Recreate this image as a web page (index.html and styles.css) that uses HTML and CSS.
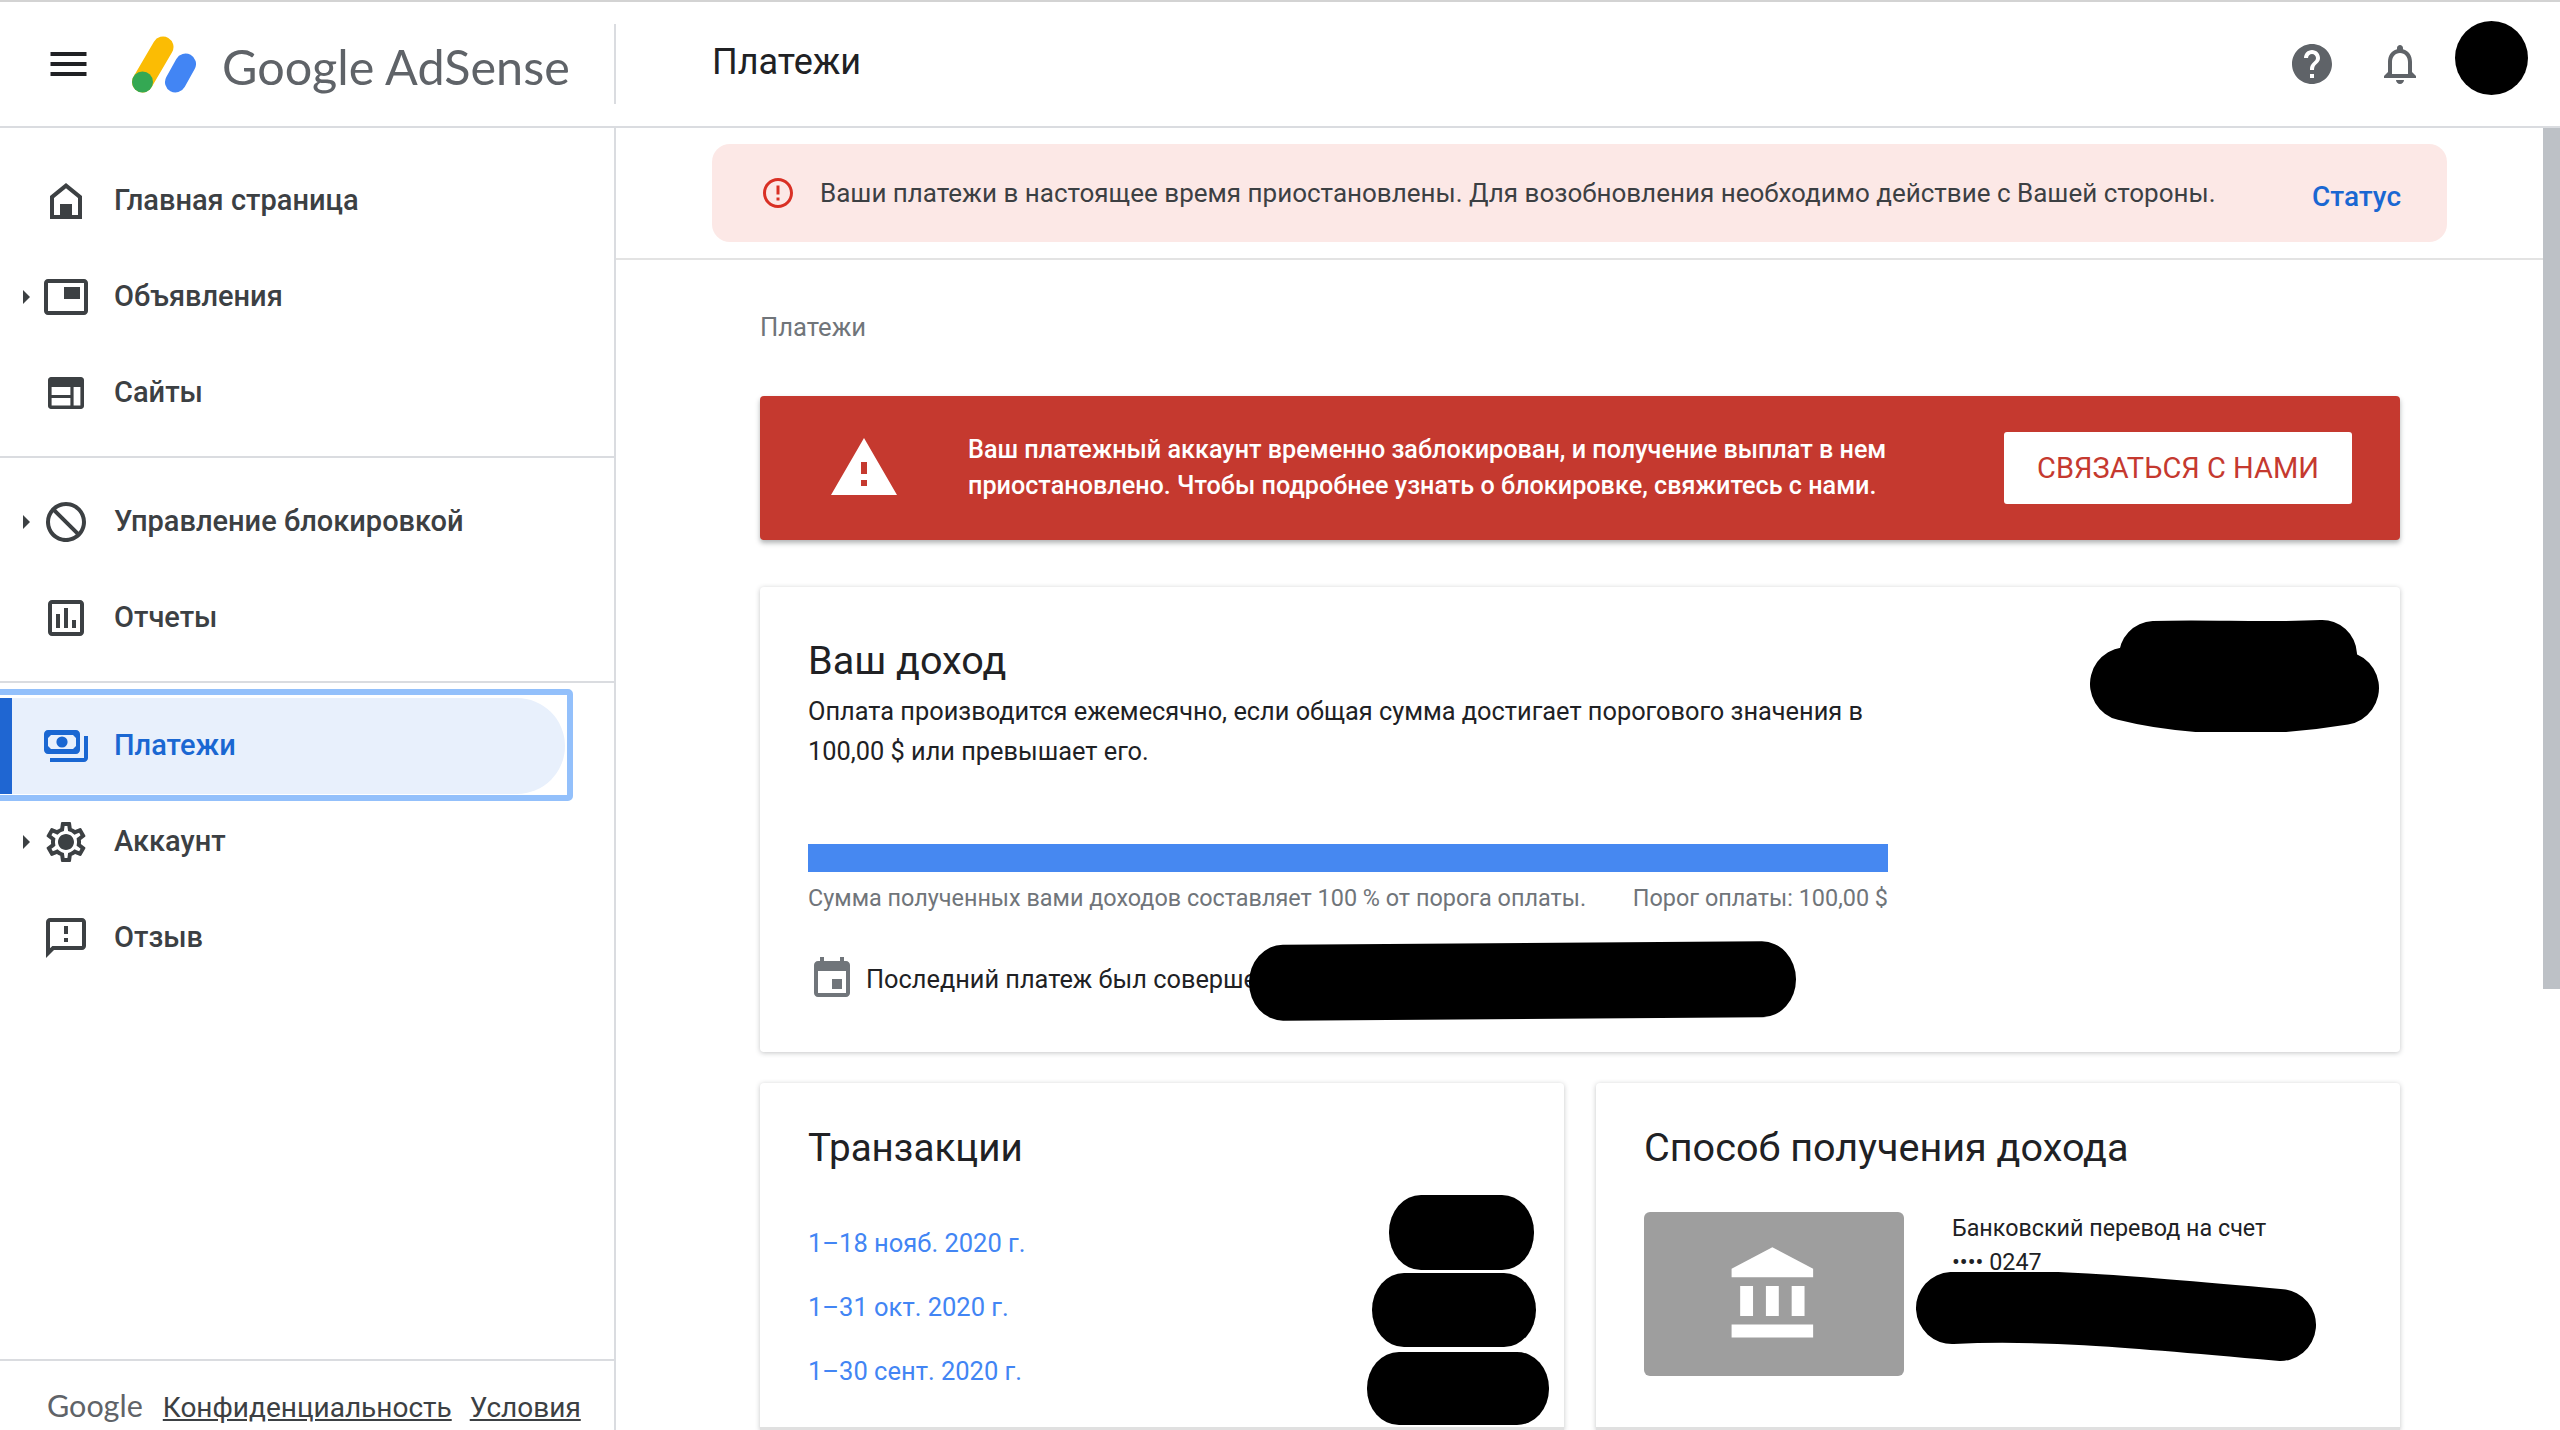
FILE: index.html
```html
<!DOCTYPE html>
<html lang="ru">
<head>
    <meta charset="UTF-8">
    <title>Платежи - Google AdSense</title>
    <link rel="stylesheet" href="styles.css">
</head>
<body>
<!-- Top bar -->
<header class="topbar">
    <div class="brand">
        <svg class="menu-icon" viewBox="3 6 18 12"><path d="M3 18h18v-2H3v2zm0-5h18v-2H3v2zm0-7v2h18V6H3z"/></svg>
        <svg class="logo" viewBox="0 0 64 57">
            <line x1="31" y1="11" x2="10.5" y2="46" stroke="#fbbc04" stroke-width="21" stroke-linecap="round"/>
            <line x1="53.5" y1="28" x2="43.5" y2="46" stroke="#4285f4" stroke-width="21" stroke-linecap="round"/>
            <circle cx="10.5" cy="46" r="10.5" fill="#34a853"/>
        </svg>
        <span class="brand-name">Google AdSense</span>
    </div>
    <h1 class="page-title">Платежи</h1>
    <div class="topbar-actions">
        <svg class="action-icon" viewBox="0 0 24 24"><path d="M12 2C6.48 2 2 6.48 2 12s4.48 10 10 10 10-4.48 10-10S17.52 2 12 2zm1 17h-2v-2h2v2zm2.07-7.75l-.9.92C13.45 12.9 13 13.5 13 15h-2v-.5c0-1.1.45-2.1 1.17-2.83l1.24-1.26c.37-.36.59-.86.59-1.41 0-1.1-.9-2-2-2s-2 .9-2 2H8c0-2.21 1.79-4 4-4s4 1.79 4 4c0 .88-.36 1.68-.93 2.25z"/></svg>
        <svg class="action-icon" viewBox="0 0 24 24"><path d="M12 22c1.1 0 2-.9 2-2h-4c0 1.1.9 2 2 2zm6-6v-5c0-3.07-1.63-5.64-4.5-6.32V4c0-.83-.67-1.5-1.5-1.5s-1.5.67-1.5 1.5v.68C7.64 5.36 6 7.92 6 11v5l-2 2v1h16v-1l-2-2zm-2 1H8v-6c0-2.48 1.51-4.5 4-4.5s4 2.02 4 4.5v6z"/></svg>
        <div class="avatar"></div>
    </div>
</header>

<div class="layout">
    <!-- Side navigation -->
    <nav class="sidebar">
        <div class="nav-group nav-group-first">
            <a class="nav-item"><span class="nav-arrow-slot"></span>
                <svg class="nav-icon" viewBox="0 0 24 24"><path fill-rule="evenodd" d="M12 3l8 6.5V21H4V9.5z M12 5.6l-6 4.9V19h3v-5.5h6V19h3v-8.5z"/></svg>
                <span class="nav-label">Главная страница</span></a>
            <a class="nav-item"><span class="nav-arrow-slot"><i class="nav-arrow"></i></span>
                <svg class="nav-icon" viewBox="0 0 24 24"><path d="M19 7h-8v6h8V7zm2-4H3c-1.1 0-2 .9-2 2v14c0 1.1.9 2 2 2h18c1.1 0 2-.89 2-2V5c0-1.1-.9-2-2-2zm0 16.01H3V4.98h18v14.03z"/></svg>
                <span class="nav-label">Объявления</span></a>
            <a class="nav-item"><span class="nav-arrow-slot"></span>
                <svg class="nav-icon" viewBox="0 0 24 24"><path fill-rule="evenodd" d="M19.5 4h-15C3.7 4 3 4.7 3 5.5v13c0 .8.7 1.5 1.5 1.5h15c.8 0 1.500-.7 1.500-1.500v-13c0-.8-.7-1.500-1.500-1.500z M4.800 9h9.400v4H4.800z M4.800 14.500h9.400v3.700H4.800z M15.800 9h3.400v9.200h-3.400z"/></svg>
                <span class="nav-label">Сайты</span></a>
        </div>
        <div class="nav-group">
            <a class="nav-item"><span class="nav-arrow-slot"><i class="nav-arrow"></i></span>
                <svg class="nav-icon" viewBox="0 0 24 24"><path transform="matrix(-1 0 0 1 24 0)" d="M12 2C6.48 2 2 6.48 2 12s4.48 10 10 10 10-4.48 10-10S17.52 2 12 2zM4 12c0-4.42 3.58-8 8-8 1.85 0 3.55.63 4.9 1.69L5.69 16.9C4.63 15.55 4 13.85 4 12zm8 8c-1.85 0-3.55-.63-4.9-1.69L18.31 7.1C19.37 8.45 20 10.15 20 12c0 4.42-3.58 8-8 8z"/></svg>
                <span class="nav-label">Управление блокировкой</span></a>
            <a class="nav-item"><span class="nav-arrow-slot"></span>
                <svg class="nav-icon" viewBox="0 0 24 24"><path d="M19 3H5c-1.1 0-2 .9-2 2v14c0 1.1.9 2 2 2h14c1.1 0 2-.9 2-2V5c0-1.1-.9-2-2-2zm0 16H5V5h14v14zM7 10h2v7H7zm4-3h2v10h-2zm4 6h2v4h-2z"/></svg>
                <span class="nav-label">Отчеты</span></a>
        </div>
        <div class="nav-group nav-group-last">
            <a class="nav-item nav-item-active"><span class="nav-arrow-slot"></span>
                <svg class="nav-icon" viewBox="0 0 24 24"><path fill-rule="evenodd" d="M19 14V6c0-1.100-.9-2-2-2H3c-1.100 0-2 .9-2 2v8c0 1.100.9 2 2 2h14c1.100 0 2-.9 2-2z M4.500 6.500L3 8v4l1.500 1.500h11L17 12V8l-1.500-1.500z M10 7.200a2.800 2.800 0 1 0 0 5.600 2.800 2.800 0 1 0 0-5.600z"/><path d="M23 7v11c0 1.100-.9 2-2 2H4v-2h17V7h2z"/></svg>
                <span class="nav-label">Платежи</span></a>
            <a class="nav-item"><span class="nav-arrow-slot"><i class="nav-arrow"></i></span>
                <svg class="nav-icon" viewBox="0 0 24 24"><path d="M19.43 12.98c.04-.32.07-.64.07-.98 0-.34-.03-.66-.07-.98l2.11-1.65c.19-.15.24-.42.12-.64l-2-3.46c-.09-.16-.26-.25-.44-.25-.06 0-.12.01-.17.03l-2.49 1c-.52-.4-1.08-.73-1.69-.98l-.38-2.65C14.46 2.18 14.25 2 14 2h-4c-.25 0-.46.18-.49.42l-.38 2.65c-.61.25-1.17.59-1.69.98l-2.49-1c-.06-.02-.12-.03-.18-.03-.17 0-.34.09-.43.25l-2 3.46c-.13.22-.07.49.12.64l2.11 1.65c-.04.32-.07.65-.07.98 0 .33.03.66.07.98l-2.11 1.65c-.19.15-.24.42-.12.64l2 3.46c.09.16.26.25.44.25.06 0 .12-.01.17-.03l2.49-1c.52.4 1.08.73 1.69.98l.38 2.65c.03.24.24.42.49.42h4c.25 0 .46-.18.49-.42l.38-2.65c.61-.25 1.17-.59 1.69-.98l2.49 1c.06.02.12.03.18.03.17 0 .34-.09.43-.25l2-3.46c.12-.22.07-.49-.12-.64l-2.11-1.65zm-1.98-1.71c.04.31.05.52.05.73 0 .21-.02.43-.05.73l-.14 1.13.89.7 1.08.84-.7 1.21-1.27-.51-1.04-.42-.9.68c-.43.32-.84.56-1.25.73l-1.06.43-.16 1.13-.2 1.35h-1.4l-.19-1.35-.16-1.13-1.06-.43c-.43-.18-.83-.41-1.23-.71l-.91-.7-1.06.43-1.27.51-.7-1.21 1.08-.84.89-.7-.14-1.13c-.03-.31-.05-.54-.05-.74s.02-.43.05-.73l.14-1.13-.89-.7-1.08-.84.7-1.21 1.27.51 1.04.42.9-.68c.43-.32.84-.56 1.25-.73l1.06-.43.16-1.13.2-1.35h1.39l.19 1.35.16 1.13 1.06.43c.43.18.83.41 1.23.71l.91.7 1.06-.43 1.27-.51.7 1.21-1.07.85-.89.7.14 1.13zM12 8c-2.21 0-4 1.79-4 4s1.79 4 4 4 4-1.79 4-4-1.79-4-4-4z"/></svg>
                <span class="nav-label">Аккаунт</span></a>
            <a class="nav-item"><span class="nav-arrow-slot"></span>
                <svg class="nav-icon" viewBox="0 0 24 24"><path d="M20 2H4c-1.100 0-1.990.9-1.990 2L2 22l4-4h14c1.100 0 2-.9 2-2V4c0-1.100-.9-2-2-2zm0 14H5.170L4 17.170V4h16v12zm-9-4h2v2h-2zm0-6h2v4h-2z"/></svg>
                <span class="nav-label">Отзыв</span></a>
        </div>
        <footer class="sidebar-footer">
            <span class="footer-google">Google</span>
            <a class="footer-link">Конфиденциальность</a>
            <a class="footer-link">Условия</a>
        </footer>
    </nav>

    <!-- Main content -->
    <main class="main">
        <div class="scrollbar"></div>
        <div class="notice-strip">
            <div class="notice">
                <svg class="notice-icon" viewBox="0 0 24 24"><path d="M11 15h2v2h-2zm0-8h2v6h-2zm.99-5C6.47 2 2 6.48 2 12s4.47 10 9.990 10C17.520 22 22 17.520 22 12S17.520 2 11.990 2zM12 20c-4.420 0-8-3.580-8-8s3.580-8 8-8 8 3.580 8 8-3.580 8-8 8z"/></svg>
                <span class="notice-text">Ваши платежи в настоящее время приостановлены. Для возобновления необходимо действие с Вашей стороны.</span>
                <a class="notice-link">Статус</a>
            </div>
        </div>

        <div class="content">
            <div class="breadcrumb">Платежи</div>

            <div class="hold-banner">
                <svg class="hold-icon" viewBox="0 0 24 24"><path d="M1 21h22L12 2 1 21zm12-3h-2v-2h2v2zm0-4h-2v-4h2v4z"/></svg>
                <p class="hold-text">Ваш платежный аккаунт временно заблокирован, и получение выплат в нем приостановлено. Чтобы подробнее узнать о блокировке, свяжитесь с нами.</p>
                <button class="hold-button">СВЯЗАТЬСЯ С НАМИ</button>
            </div>

            <section class="card card-earnings">
                <h2 class="card-title">Ваш доход</h2>
                <p class="earnings-desc">Оплата производится ежемесячно, если общая сумма достигает порогового значения в 100,00 $ или превышает его.</p>
                <div class="progress-bar"></div>
                <div class="progress-caption">
                    <span>Сумма полученных вами доходов составляет 100 % от порога оплаты.</span>
                    <span>Порог оплаты: 100,00 $</span>
                </div>
                <div class="last-payment">
                    <svg class="last-payment-icon" viewBox="0 0 24 24"><path d="M17 12h-5v5h5v-5zM16 1v2H8V1H6v2H5c-1.110 0-1.990.9-1.990 2L3 19c0 1.100.89 2 2 2h14c1.100 0 2-.9 2-2V5c0-1.100-.9-2-2-2h-1V1h-2zm3 18H5V8h14v11z"/></svg>
                    Последний платеж был совершен
                </div>
                <svg class="redact-balance" viewBox="0 0 290 112"><path d="M37 64C100 80 180 80 252 68" fill="none" stroke="#000" stroke-width="74" stroke-linecap="round"/><path d="M64 36C120 34 170 38 232 35" fill="none" stroke="#000" stroke-width="70" stroke-linecap="round"/></svg>
                <div class="redact redact-payment"></div>
            </section>

            <div class="card-row">
                <section class="card card-short">
                    <h2 class="card-title card-title-narrow">Транзакции</h2>
                    <ul class="transactions">
                        <li><a>1–18 нояб. 2020 г.</a></li>
                        <li><a>1–31 окт. 2020 г.</a></li>
                        <li><a>1–30 сент. 2020 г.</a></li>
                    </ul>
                    <div class="redact redact-sum-1"></div>
                    <div class="redact redact-sum-2"></div>
                    <div class="redact redact-sum-3"></div>
                </section>
                <section class="card card-short">
                    <h2 class="card-title">Способ получения дохода</h2>
                    <div class="method">
                        <div class="method-thumb">
                            <svg class="method-icon" viewBox="0 0 24 24"><path d="M4 10v7h3v-7H4zm6 0v7h3v-7h-3zM2 22h19v-3H2v3zm14-12v7h3v-7h-3zm-4.500-9L2 6v2h19V6l-9.500-5z"/></svg>
                        </div>
                        <div class="method-text">
                            <div>Банковский перевод на счет</div>
                            <div>•••• 0247</div>
                        </div>
                    </div>
                    <svg class="redact-stroke" viewBox="0 0 400 89"><path d="M36 36C120 32 200 38 364 53" fill="none" stroke="#000" stroke-width="72" stroke-linecap="round"/></svg>
                </section>
            </div>
        </div>
    </main>
</div>
</body>
</html>
```

FILE: styles.css
```css
* {
    box-sizing: border-box;
}

html,
body {
    height: 100%;
    margin: 0;
    overflow: hidden;
}

body {
    display: flex;
    flex-direction: column;
    font-family: Roboto, "Liberation Sans", sans-serif;
    color: #202124;
    background-color: #fff;
}

h1, h2, p, ul {
    margin: 0;
    padding: 0;
    font-weight: 400;
}

/* Top bar */
.topbar {
    display: flex;
    align-items: center;
    flex: none;
    height: 128px;
    border-top: 2px solid #d3d3d3;
    border-bottom: 2px solid #dadce0;
}

.brand {
    display: flex;
    align-items: center;
    flex: none;
    width: 616px;
    height: 80px;
    padding-left: 50px;
    border-right: 2px solid #dadce0;
}

.menu-icon {
    width: 37px;
    height: 24px;
    margin-right: 45px;
    fill: #202124;
}

.logo {
    width: 64px;
    height: 57px;
    margin-right: 26px;
}

.brand-name {
    font-family: Lato, sans-serif;
    font-size: 48.5px;
    color: #5f6368;
    margin-top: 4px;
}

.page-title {
    margin: 0 0 4px 96px;
    font-size: 36px;
}

.topbar-actions {
    display: flex;
    align-items: center;
    gap: 40px;
    margin-left: auto;
    padding-right: 32px;
}

.action-icon {
    width: 48px;
    height: 48px;
    fill: #5f6368;
}

.avatar {
    width: 73px;
    height: 74px;
    margin: 0 0 12px -9px;
    border-radius: 50%;
    background-color: #000;
}

/* Sidebar */
.layout {
    display: flex;
    flex: 1;
    min-height: 0;
}

.sidebar {
    display: flex;
    flex-direction: column;
    flex: none;
    width: 616px;
    border-right: 2px solid #dadce0;
}

.nav-group {
    padding: 16px 0 15px;
    border-bottom: 2px solid #dadce0;
}

.nav-group-first {
    padding-top: 25px;
}

.nav-group-last {
    padding-top: 15px;
    border-bottom: none;
}

.nav-item {
    display: flex;
    align-items: center;
    position: relative;
    height: 96px;
    padding-left: 22px;
    font-size: 29px;
    font-weight: 500;
    color: #3c4043;
}

.nav-label {
    margin-bottom: 3px;
}

.nav-arrow-slot {
    display: flex;
    flex: none;
    width: 20px;
}

.nav-arrow {
    border-left: 7px solid #3c4043;
    border-top: 7px solid transparent;
    border-bottom: 7px solid transparent;
    margin-left: 1px;
}

.nav-icon {
    flex: none;
    width: 48px;
    height: 48px;
    margin-right: 24px;
    fill: #3c4043;
}

.nav-item-active {
    width: 565px;
    padding-left: 10px;
    border-left: 12px solid #1f66d2;
    border-radius: 0 48px 48px 0;
    color: #1a67d2;
    background-color: #e8f0fc;
}

.nav-item-active .nav-icon {
    fill: #1a67d2;
}

/* Focus ring drawn over the active row */
.nav-item-active::after {
    content: '';
    position: absolute;
    top: -9px;
    left: -20px;
    right: -8px;
    bottom: -7px;
    border: 6px solid #93c0fb;
    border-radius: 5px;
}

.sidebar-footer {
    display: flex;
    align-items: baseline;
    margin-top: auto;
    height: 71px;
    padding: 26px 0 0 47px;
    border-top: 2px solid #dadce0;
    font-size: 28px;
    color: #3c4043;
}

.footer-google {
    font-family: Lato, sans-serif;
    font-size: 30.5px;
    color: #5f6368;
    margin-right: 20px;
}

.footer-link {
    margin-right: 18px;
    text-decoration: underline;
}

/* Main */
.main {
    position: relative;
    flex: 1;
    min-width: 0;
    padding-right: 17px;
}

.scrollbar {
    position: absolute;
    top: 0;
    right: 0;
    width: 17px;
    height: 861px;
    background-color: #bdc1c6;
}

.notice-strip {
    padding: 16px 96px 16px 96px;
    border-bottom: 2px solid #e3e3e3;
}

.notice {
    display: flex;
    align-items: center;
    height: 98px;
    padding: 0 46px 0 48px;
    border-radius: 18px;
    background-color: #fce8e6;
}

.notice-icon {
    flex: none;
    width: 36px;
    height: 36px;
    margin-right: 24px;
    fill: #d93025;
}

.notice-text {
    font-size: 26px;
    color: #3c4043;
}

.notice-link {
    margin: 6px 0 0 auto;
    font-size: 28px;
    font-weight: 500;
    color: #1a67d2;
}

.content {
    padding: 52px 143px 0 144px;
}

.breadcrumb {
    height: 30px;
    line-height: 30px;
    font-size: 25.6px;
    color: #70757a;
}

.hold-banner {
    display: flex;
    align-items: center;
    height: 144px;
    margin-top: 54px;
    padding: 0 48px 0 68px;
    border-radius: 4px;
    color: #fff;
    background-color: #c5392f;
    box-shadow: 0 3px 5px rgba(60, 64, 67, 0.4);
}

.hold-icon {
    flex: none;
    width: 72px;
    height: 72px;
    margin-right: 68px;
    fill: #fff;
}

.hold-text {
    flex: 1;
    max-width: 960px;
    font-size: 25.2px;
    font-weight: 500;
    line-height: 36px;
}

.hold-button {
    flex: none;
    width: 348px;
    height: 72px;
    margin-left: auto;
    padding: 0;
    border: none;
    border-radius: 3px;
    font-family: inherit;
    font-size: 29px;
    color: #c5392f;
    background-color: #fff;
}

/* Cards */
.card {
    position: relative;
    margin-top: 47px;
    border-radius: 4px;
    background-color: #fff;
    box-shadow: 0 1px 5px rgba(60, 64, 67, 0.3);
}

.card-earnings {
    height: 465px;
    padding: 52px 48px 0 48px;
}

.card-title {
    height: 44px;
    line-height: 44px;
    font-size: 39.6px;
}

.card-title-narrow {
    font-size: 38.6px;
}

.earnings-desc {
    max-width: 1085px;
    margin-top: 8px;
    font-size: 25.35px;
    line-height: 40px;
}

.progress-bar {
    width: 1080px;
    height: 28px;
    margin-top: 73px;
    background-color: #4688f1;
}

.progress-caption {
    display: flex;
    justify-content: space-between;
    width: 1080px;
    margin-top: 11px;
    line-height: 30px;
    font-size: 23.4px;
    color: #70757a;
}

.last-payment {
    display: flex;
    align-items: center;
    margin-top: 42px;
    font-size: 25.35px;
}

.last-payment-icon {
    width: 48px;
    height: 48px;
    margin-right: 10px;
    fill: #70757a;
}

.card-row {
    display: grid;
    grid-template-columns: 804px 804px;
    gap: 32px;
    margin-top: 31px;
}

.card-short {
    height: 347px;
    margin-top: 0;
    padding: 43px 0 0 48px;
    border-bottom: 3px solid #e0e0e0;
    border-radius: 4px 4px 0 0;
}

.transactions {
    margin-top: 41px;
    list-style: none;
    font-size: 25.5px;
    line-height: 64px;
    color: #4285f4;
}

.method {
    display: flex;
    margin: 42px 0 0 0;
}

.method-thumb {
    display: flex;
    align-items: center;
    justify-content: center;
    width: 260px;
    height: 164px;
    border-radius: 6px;
    background-color: #9e9e9e;
}

.method-icon {
    width: 103px;
    height: 103px;
    fill: #fff;
}

.method-text {
    margin: -1px 0 0 48px;
    font-size: 23.3px;
    line-height: 34px;
}

/* Blacked out parts of the screenshot */
.redact {
    position: absolute;
    background-color: #000;
}

.redact-balance {
    position: absolute;
    top: 33px;
    left: 1330px;
    width: 290px;
    height: 112px;
}

.redact-payment {
    top: 356px;
    left: 489px;
    width: 547px;
    height: 76px;
    border-radius: 34px / 38px;
    transform: rotate(-0.4deg);
}

.redact-sum-1 {
    top: 112px;
    left: 629px;
    width: 145px;
    height: 75px;
    border-radius: 32px / 37px;
}

.redact-sum-2 {
    top: 190px;
    left: 612px;
    width: 164px;
    height: 74px;
    border-radius: 32px / 37px;
}

.redact-sum-3 {
    top: 269px;
    left: 607px;
    width: 182px;
    height: 73px;
    border-radius: 32px / 36px;
}

.redact-stroke {
    position: absolute;
    top: 189px;
    left: 320px;
    width: 400px;
    height: 89px;
}
```
